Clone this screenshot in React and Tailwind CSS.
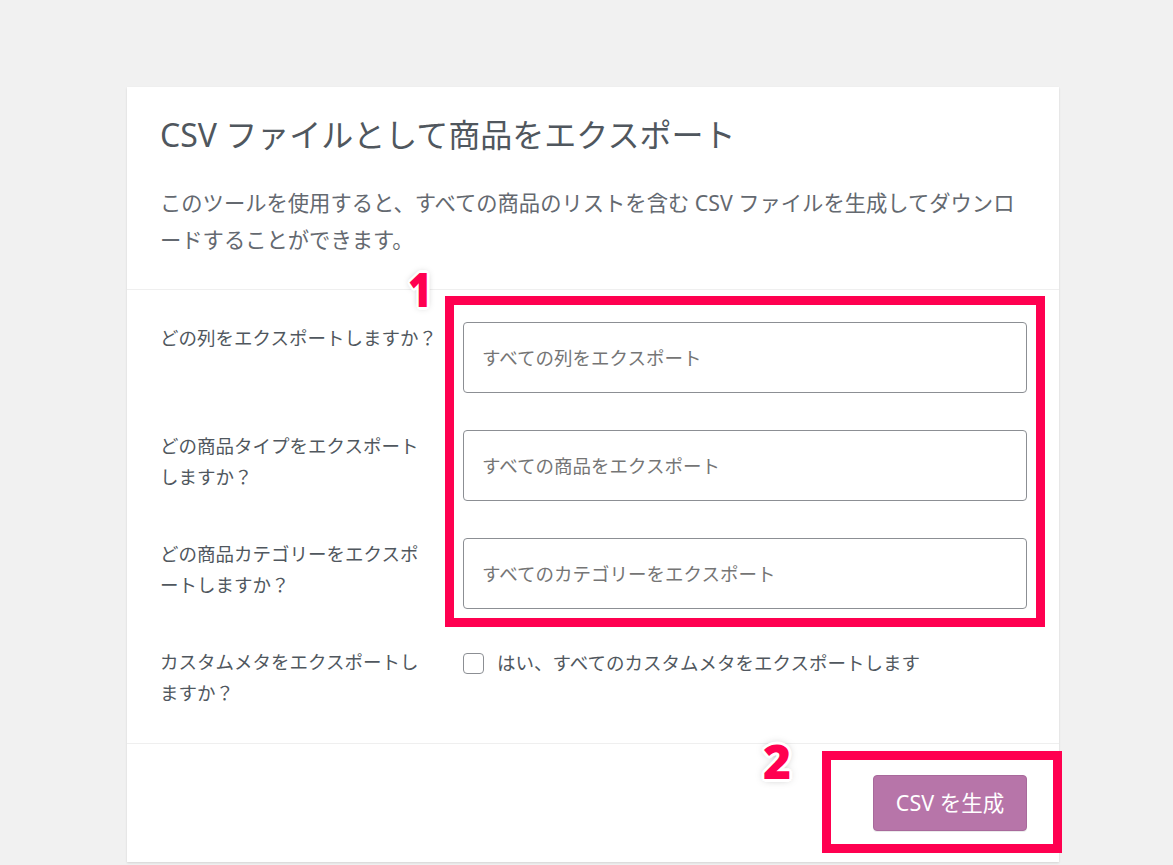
import React from "react";

const FONT = { fontFamily: '"Noto Sans", "Noto Sans CJK JP", sans-serif' };

function Badge({ children, className }) {
  return (
    <span
      className={
        "absolute text-[48px] leading-none font-black text-[#ff0050] [text-shadow:2px_0_#fff,-2px_0_#fff,0_2px_#fff,0_-2px_#fff,2px_2px_#fff,-2px_-2px_#fff,2px_-2px_#fff,-2px_2px_#fff,3px_0_#fff,-3px_0_#fff,0_3px_#fff,0_-3px_#fff,0_0_8px_rgba(0,0,0,0.35)] " +
        className
      }
      style={{ fontFamily: '"Noto Sans", "Open Sans", sans-serif' }}
    >
      {children}
    </span>
  );
}

function Field({ label, placeholder }) {
  return (
    <div className="flex items-start">
      <div className="w-[303px] shrink-0 text-[18.5px] leading-[31px] text-[#50575e] whitespace-nowrap">
        {label}
      </div>
      <div className="flex-1 h-[71px] rounded-[4px] border border-[#8c8f94] flex items-center px-[18px] text-[18.5px] text-[#757575] whitespace-nowrap">
        {placeholder}
      </div>
    </div>
  );
}

export default function App() {
  return (
    <div className="min-h-screen bg-[#f1f1f1] pt-[87px]" style={FONT}>
      <div className="relative ml-[127px] w-[932px] bg-white shadow-[0_1px_2px_rgba(0,0,0,0.12)]">
        <div className="px-[33px] pt-[28px] pb-[31px] border-b border-[#efefef]">
          <h2 className="text-[32px] leading-[40px] font-normal text-[#50575e] whitespace-nowrap">
            CSV ファイルとして商品をエクスポート
          </h2>
          <p className="mt-[29px] text-[21.3px] leading-[37px] text-[#646970] whitespace-nowrap">
            このツールを使用すると、すべての商品のリストを含む CSV ファイルを生成してダウンロ
            <br />
            ードすることができます。
          </p>
        </div>

        <div className="pl-[33px] pr-[32px] pt-[32px] pb-[35px] border-b border-[#efefef] flex flex-col gap-[37px]">
          <Field label="どの列をエクスポートしますか？" placeholder="すべての列をエクスポート" />
          <Field
            label={
              <>
                どの商品タイプをエクスポート
                <br />
                しますか？
              </>
            }
            placeholder="すべての商品をエクスポート"
          />
          <Field
            label={
              <>
                どの商品カテゴリーをエクスポ
                <br />
                ートしますか？
              </>
            }
            placeholder="すべてのカテゴリーをエクスポート"
          />
          <div className="flex items-start">
            <div className="w-[303px] shrink-0 text-[18.5px] leading-[31px] text-[#50575e] whitespace-nowrap">
              カスタムメタをエクスポートし
              <br />
              ますか？
            </div>
            <label className="flex items-center gap-[13px] h-[34px] text-[18.5px] text-[#50575e] whitespace-nowrap">
              <span className="w-[21px] h-[21px] rounded-[4px] border border-[#8c8f94] bg-white" />
              はい、すべてのカスタムメタをエクスポートします
            </label>
          </div>
        </div>

        <div className="flex justify-end pr-[32px] pt-[31px] pb-[31px]">
          <button className="w-[154px] h-[56px] rounded-[4px] bg-[#b775a9] border border-[#a8699b] text-white text-[21.5px] shadow-[0_1px_0_rgba(0,0,0,0.08)]">
            CSV を生成
          </button>
        </div>

        <div className="absolute left-[318px] top-[209px] w-[600px] h-[331px] border-[9px] border-[#ff0050] pointer-events-none" />
        <div className="absolute left-[695px] top-[664px] w-[240px] h-[102px] border-[9px] border-[#ff0050] pointer-events-none" />
        <Badge className="left-[279px] top-[178px] scale-x-[0.85]">1</Badge>
        <Badge className="left-[636px] top-[650px]">2</Badge>
      </div>
    </div>
  );
}
